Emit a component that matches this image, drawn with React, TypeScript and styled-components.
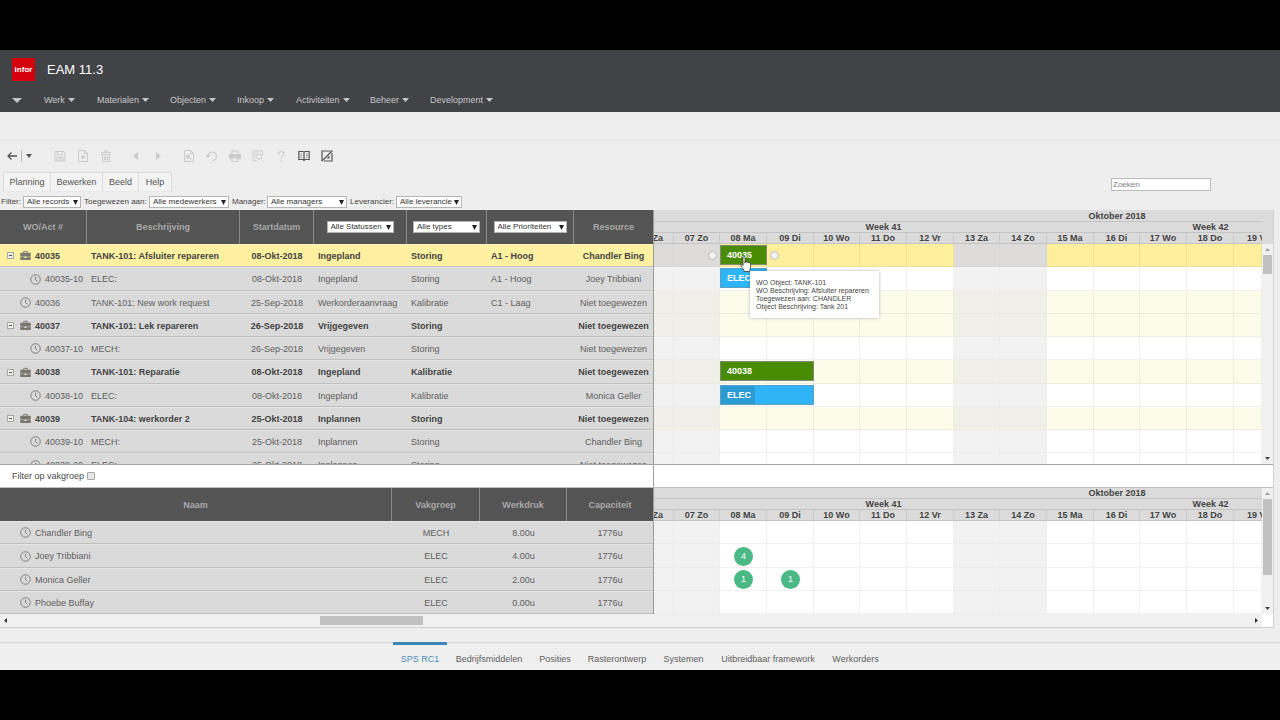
import React from "react";
import styled, { createGlobalStyle, css } from "styled-components";

const GlobalStyle = createGlobalStyle`
  * { box-sizing: border-box; }
  body {
    margin: 0;
    background: #000;
    font-family: "Liberation Sans", Arial, sans-serif;
    font-size: 9px;
    color: #4a4a4a;
  }
  button, input, select { font-family: inherit; }
`;

/* ---------- frame ---------- */

const Screen = styled.div`
  min-height: 100vh;
  display: flex;
  flex-direction: column;
  padding: 50px 0;
  background: #000;
`;

const Application = styled.div`
  flex: 1;
  display: flex;
  flex-direction: column;
  background: #eeeeee;
`;

/* ---------- top bar ---------- */

const TopBar = styled.header`
  background: #424347;
  height: 62px;
`;

const Brand = styled.div`
  display: flex;
  align-items: center;
  gap: 12px;
  height: 38px;
  padding-left: 12px;
`;

const Logo = styled.div`
  width: 23px;
  height: 23px;
  background: #d5000e;
  color: #fff;
  font: bold 8px/23px "Liberation Sans", Arial, sans-serif;
  text-align: center;
`;

const ProductName = styled.h1`
  margin: 0;
  font-size: 13px;
  font-weight: 400;
  color: #fff;
`;

const MainNav = styled.nav`
  display: flex;
  align-items: center;
  height: 24px;
  padding-left: 12px;
`;

const NavButton = styled.button<{ $width: number }>`
  display: flex;
  align-items: center;
  gap: 3px;
  width: ${(p) => p.$width}px;
  padding: 0;
  border: 0;
  background: none;
  color: #c6c6c9;
  font-size: 9px;
  line-height: 12px;
  text-align: left;
`;

/* ---------- tool area ---------- */

const TitleStrip = styled.div`
  height: 29px;
  border-bottom: 1px solid #e3e3e3;
`;

const Toolbar = styled.div`
  display: flex;
  align-items: center;
  height: 31px;
  padding: 0 0 2px 5px;
`;

const ToolButton = styled.button<{ $gap?: number; $dim?: boolean; $narrow?: boolean }>`
  display: flex;
  align-items: center;
  justify-content: center;
  width: ${(p) => (p.$narrow ? 14 : 23)}px;
  height: 16px;
  margin-left: ${(p) => p.$gap ?? 0}px;
  padding: 0;
  border: 0;
  background: none;
  color: ${(p) => (p.$dim ? "#cbcbcb" : "#555")};
`;

const ToolDivider = styled.span`
  width: 1px;
  height: 12px;
  margin-left: 2px;
  background: #bdbdbd;
`;

const MenuRow = styled.div`
  display: flex;
  align-items: flex-start;
  height: 20px;
  padding: 0 69px 0 3px;
`;

const MenuButton = styled.button<{ $width: number }>`
  width: ${(p) => p.$width}px;
  height: 20px;
  padding: 0;
  border: 1px solid #dcdcdc;
  border-left-width: 0;
  border-bottom-color: #e8e8e8;
  background: #f3f3f3;
  color: #555;
  font-size: 9px;
  &:first-child { border-left-width: 1px; }
`;

const SearchBox = styled.input`
  width: 100px;
  height: 13px;
  margin: 6px 0 0 auto;
  padding: 0 1px;
  border: 1px solid #bcbcbc;
  background: #fff;
  font-size: 8px;
  &::placeholder { color: #808080; opacity: 1; }
`;

const FilterRow = styled.div`
  display: flex;
  align-items: center;
  height: 18px;
  padding-top: 1px;
`;

const FilterLabel = styled.label<{ $width: number }>`
  width: ${(p) => p.$width}px;
  padding-left: 3px;
  font-size: 8px;
  line-height: 12px;
  white-space: nowrap;
  color: #444;
  &:first-child { padding-left: 1px; }
`;

const SelectFrame = styled.span<{ $width: number }>`
  position: relative;
  display: inline-block;
  width: ${(p) => p.$width}px;
  height: 12px;
  svg {
    position: absolute;
    right: 3px;
    top: 4px;
    pointer-events: none;
  }
`;

const SelectBox = styled.select`
  appearance: none;
  display: block;
  width: 100%;
  height: 12px;
  padding: 0 9px 0 3px;
  border: 1px solid #b4b4b4;
  border-radius: 0;
  background: #fff;
  color: #333;
  font-size: 8px;
  line-height: 10px;
`;

/* ---------- planning panel ---------- */

const Panel = styled.main`
  margin-right: 7px;
  background: #fff;
  border-bottom: 1px solid #cfcfcf;
  box-shadow: 1px 0 0 #d2d2d2;
`;

const Split = styled.section`
  display: grid;
  grid-template-columns: 653px minmax(0, 1fr);
`;

const ListPane = styled.div<{ $height: number; $line?: boolean }>`
  height: ${(p) => p.$height}px;
  overflow: hidden;
  ${(p) => p.$line && css`border-bottom: 1px solid #a6a6a6;`}
`;

const rowHeights = css`
  height: 23px;
  &:nth-child(4n + 2) { height: 24px; }
`;

const ListTable = styled.table<{ $head: number }>`
  width: 100%;
  table-layout: fixed;
  border-collapse: separate;
  border-spacing: 0;
  thead th { height: ${(p) => p.$head}px; }
`;

const HeadCell = styled.th<{ $width: number }>`
  width: ${(p) => p.$width}px;
  padding: 0;
  background: #545454;
  border-right: 1px solid #8a8a8a;
  color: #a9a9a9;
  font-size: 9px;
  font-weight: 700;
  text-align: center;
  vertical-align: middle;
  &:last-child { border-right: 0; }
`;

const ListRow = styled.tr<{ $bold?: boolean; $selected?: boolean }>`
  ${rowHeights}
  background: ${(p) => (p.$selected ? "#fdf0a0" : "#dadada")};
  color: ${(p) => (p.$bold ? "#444" : "#606060")};
  font-weight: ${(p) => (p.$bold ? 700 : 400)};
`;

const ListCell = styled.td<{ $center?: boolean; $pad?: number }>`
  padding: 1px 0 0 ${(p) => (p.$center ? 0 : p.$pad ?? 4)}px;
  border-bottom: 1px solid #bfbfbf;
  box-shadow: inset 0 1px 0 rgba(255, 255, 255, 0.35);
  font-size: 9px;
  line-height: 12px;
  text-align: ${(p) => (p.$center ? "center" : "left")};
  white-space: nowrap;
  vertical-align: middle;
`;

const TreeLabel = styled.span<{ $indent: number }>`
  display: flex;
  align-items: center;
  gap: 4px;
  padding-left: ${(p) => p.$indent}px;
`;

const Expander = styled.button`
  width: 7px;
  height: 7px;
  margin-right: 2px;
  padding: 0;
  display: flex;
  align-items: center;
  justify-content: center;
  border: 1px solid #a8a8a8;
  background: #eeeeea;
  &::before {
    content: "";
    width: 3px;
    height: 1px;
    background: #555;
  }
`;

/* ---------- timeline ---------- */

const dayColumns =
  "20px 46px 47px 47px 46px 47px 47px 46px 47px 47px 46px 47px 47px minmax(0, 1fr)";

const Timeline = styled.div`
  border-left: 1px solid #9c9c9c;
  min-width: 0;
`;

const TimelineWithBar = styled(Timeline)`
  display: flex;
`;

const TimelineMain = styled.div`
  flex: 1;
  min-width: 0;
`;

const Scale = styled.div<{ $top?: boolean }>`
  background: #dbdbdb;
  ${(p) => p.$top && css`padding: 1px 11px 0 0;`}
`;

const ScaleRow = styled.div`
  display: grid;
  grid-template-columns: ${dayColumns};
  height: 11px;
  border-bottom: 1px solid #c4c4c4;
  font-size: 9px;
  font-weight: 700;
  line-height: 11px;
  color: #444;
`;

const ScaleLabel = styled.span<{ $column: number }>`
  grid-column: ${(p) => p.$column};
  justify-self: center;
  white-space: nowrap;
`;

const DayLabel = styled.span<{ $cut?: "start" | "end" }>`
  display: flex;
  justify-content: ${(p) =>
    p.$cut === "start" ? "flex-end" : p.$cut === "end" ? "flex-start" : "center"};
  padding-right: ${(p) => (p.$cut === "start" ? 10 : 0)}px;
  padding-left: ${(p) => (p.$cut === "end" ? 13 : 0)}px;
  border-right: 1px solid #cacaca;
  overflow: hidden;
  white-space: nowrap;
  &:last-child { border-right: 0; }
`;

const BodyRows = styled.div<{ $height: number }>`
  height: ${(p) => p.$height}px;
  overflow: hidden;
`;

const BodyLine = styled.div`
  display: flex;
  border-bottom: 1px solid #a6a6a6;
`;

type Tone = "selected" | "pale" | "plain";

const toneColour: Record<Tone, [string, string]> = {
  selected: ["#feef9d", "#dddcda"],
  pale: ["#fdfbe9", "#f0efe8"],
  plain: ["#ffffff", "#f2f2f2"],
};

const GanttRow = styled.div`
  ${rowHeights}
  display: grid;
  grid-template-columns: ${dayColumns};
  grid-template-rows: 100%;
`;

const DayCell = styled.div<{ $tone: Tone; $off: boolean; $column: number }>`
  grid-row: 1;
  grid-column: ${(p) => p.$column};
  background: ${(p) => toneColour[p.$tone][p.$off ? 1 : 0]};
  border-right: 1px solid rgba(0, 0, 0, ${(p) => (p.$off ? 0.02 : 0.06)});
  border-bottom: 1px solid rgba(0, 0, 0, ${(p) => (p.$off ? 0.02 : 0.06)});
`;

const TaskBar = styled.div<{ $days: number; $kind: "order" | "activity" }>`
  grid-row: 1;
  grid-column: 3 / span ${(p) => p.$days};
  position: relative;
  height: 20px;
  margin-top: 1px;
  border: 1px solid ${(p) => (p.$kind === "order" ? "#7f8a76" : "#5c9fc4")};
  background: ${(p) => (p.$kind === "order" ? "#4a8b04" : "#2fb5f7")};
  color: #fff;
  font-size: 9px;
  font-weight: 700;
  line-height: 19px;
`;

const TaskName = styled.span<{ $progress?: boolean }>`
  display: block;
  width: ${(p) => (p.$progress ? "34px" : "auto")};
  height: 18px;
  padding-left: 6px;
  background: ${(p) => (p.$progress ? "#2b9bd3" : "none")};
`;

const LinkHandle = styled.span<{ $side: "left" | "right" }>`
  position: absolute;
  top: 5px;
  ${(p) => p.$side}: -13px;
  width: 9px;
  height: 9px;
  border: 1px solid #bcbcbc;
  border-radius: 50%;
  background: #f2f1ee;
`;

const Tooltip = styled.div`
  position: absolute;
  left: 29px;
  top: 25px;
  z-index: 2;
  width: 129px;
  padding: 8px 6px 7px;
  background: #fff;
  box-shadow: 0 0 3px rgba(0, 0, 0, 0.3);
  color: #444;
  font-size: 7px;
  font-weight: 400;
  line-height: 8px;
  white-space: nowrap;
`;

const Pointer = styled.svg`
  position: absolute;
  left: 19px;
  top: 10px;
  z-index: 3;
`;

const LoadBadge = styled.span<{ $column: number }>`
  grid-row: 1;
  grid-column: ${(p) => p.$column};
  place-self: center;
  width: 19px;
  height: 19px;
  border-radius: 50%;
  background: #4bb985;
  color: #fff;
  font-size: 9px;
  line-height: 19px;
  text-align: center;
`;

const ScrollTrack = styled.div`
  display: flex;
  flex-direction: column;
  align-items: center;
  width: 11px;
  background: #f1f1f1;
`;

const ScrollArrow = styled.span`
  display: flex;
  align-items: center;
  justify-content: center;
  width: 11px;
  height: 11px;
`;

const ScrollThumb = styled.span<{ $length: number }>`
  width: 9px;
  height: ${(p) => p.$length}px;
  margin-bottom: auto;
  background: #c1c1c1;
`;

const GroupFilter = styled.div`
  display: grid;
  grid-template-columns: 653px minmax(0, 1fr);
  height: 23px;
  border-bottom: 1px solid #bdbdbd;
`;

const GroupFilterLabel = styled.label`
  display: flex;
  align-items: center;
  gap: 3px;
  padding-left: 12px;
  color: #4a4a4a;
`;

const GroupCheck = styled.input`
  appearance: none;
  width: 8px;
  height: 8px;
  margin: 0;
  border: 1px solid #a8a8a8;
  border-radius: 1px;
  background: #e6e6e6;
`;

const HorizontalScroll = styled.div`
  display: flex;
  align-items: center;
  height: 13px;
  margin-right: 11px;
  background: #f0f0f0;
`;

const HorizontalThumb = styled.span`
  width: 103px;
  height: 9px;
  margin: 0 auto 0 309px;
  background: #c1c1c1;
`;

/* ---------- bottom tabs ---------- */

const BottomTabs = styled.nav`
  display: flex;
  height: 28px;
  margin-top: auto;
  padding-left: 393px;
  border-top: 1px solid #d6d6d6;
  background: #efefef;
`;

const BottomTab = styled.a<{ $width: number; $active?: boolean }>`
  width: ${(p) => p.$width}px;
  margin-top: -1px;
  border-top: 3px solid ${(p) => (p.$active ? "#3c87b8" : "transparent")};
  color: ${(p) => (p.$active ? "#4a8dbb" : "#606060")};
  font-size: 9px;
  line-height: 29px;
  text-align: center;
  text-decoration: none;
  white-space: nowrap;
`;

/* ---------- icons ---------- */

type Direction = "down" | "up" | "left" | "right";

const triangles: Record<Direction, string> = {
  down: "M0 0h8L4 8z",
  up: "M0 8h8L4 0z",
  left: "M8 0v8L0 4z",
  right: "M0 0v8l8-4z",
};

function Triangle({ to, w, h, fill = "currentColor" }: { to: Direction; w: number; h: number; fill?: string }) {
  return (
    <svg width={w} height={h} viewBox="0 0 8 8" preserveAspectRatio="none" aria-hidden="true">
      <path d={triangles[to]} fill={fill} />
    </svg>
  );
}

function Icon({ children, size = 12 }: { children: React.ReactNode; size?: number }) {
  return (
    <svg
      width={size}
      height={size}
      viewBox="0 0 12 12"
      fill="none"
      stroke="currentColor"
      strokeWidth="1"
      aria-hidden="true"
    >
      {children}
    </svg>
  );
}

const BackIcon = () => (
  <Icon>
    <path d="M11 6H2M5.500 2.500L2 6l3.500 3.500" strokeWidth="1.300" />
  </Icon>
);
const SaveIcon = () => (
  <Icon>
    <path d="M1 1.500h8.500l1.500 1.500v8H1zM3 1.500v3h5.500v-3M3 11V7h6v4M4.500 8.500h3M4.500 10h3" />
  </Icon>
);
const NewIcon = () => (
  <Icon>
    <path d="M1.500 .5h6l3 3v8h-9zM7.500 .5v3h3" />
    <path d="M6 5v4M4 7h4" strokeWidth="1.500" />
  </Icon>
);
const TrashIcon = () => (
  <Icon>
    <path d="M1 2.500h10M4.500 2.500V.8h3v1.700M1.500 4.500h9M2.500 4.500v7h7v-7M4.500 6v4M6 6v4M7.500 6v4" />
  </Icon>
);
const PageIcon = () => (
  <Icon>
    <path d="M1.500 .5h6l3 3v8h-9zM7.500 .5v3h3" />
    <path d="M4 9V5.500h3M4 5.500l4 4" strokeWidth="1.300" />
  </Icon>
);
const UndoIcon = () => (
  <Icon>
    <path d="M2 6.500a4.200 4.200 0 1 1 4.500 4M.2 5L2 7l2.200-1.700" strokeWidth="1.200" />
  </Icon>
);
const PrintIcon = () => (
  <Icon>
    <path d="M3 4V1h6v3M3 8h6v3.500H3z" />
    <path d="M.5 4.500h11v4H9V7H3v1.500H.5z" fill="currentColor" />
  </Icon>
);
const PreviewIcon = () => (
  <Icon>
    <path d="M5 10.500H1V1h9.500v5M2.500 3h3M2.500 5h1.500M2.500 7h1.500M8.800 9l2.400 2.300" />
    <circle cx="7" cy="6.500" r="2.500" />
  </Icon>
);
const HelpIcon = () => (
  <Icon>
    <path d="M3.500 4.200C3.500 .8 9 .8 9 4 9 6 6.200 5.800 6.200 8.500M6.200 10v1.500" strokeWidth="1.200" />
  </Icon>
);
const BookIcon = () => (
  <Icon>
    <path d="M.8 1.500h4.400L6 2.200l.8-.7h4.400v8H7L6 10.500 5 9.500H.8zM6 2.200v8.300" strokeWidth="1.200" />
    <path d="M2.200 3.800h2M2.200 5.500h2M2.200 7.300h2M7.800 3.800h2M7.800 5.500h2M7.800 7.300h2" strokeWidth=".5" />
  </Icon>
);
const SwitchOffIcon = () => (
  <Icon>
    <path d="M9.500 1H1v10M3 11h8V3" strokeWidth="1.200" />
    <path d="M11.500 .5L1 11" strokeWidth="1.300" />
    <path d="M8.500 5.500v3h-3z" fill="currentColor" stroke="none" />
  </Icon>
);
const ClockIcon = () => (
  <Icon size={11}>
    <circle cx="6" cy="6" r="5.200" stroke="#777" />
    <path d="M6 3v3.200l2 1.600" stroke="#777" />
  </Icon>
);
const BriefcaseIcon = () => (
  <svg width="11" height="11" viewBox="0 0 12 12" aria-hidden="true">
    <path d="M4 3.200V1.500h4v1.700" fill="none" stroke="#7b776f" />
    <path d="M.3 3h11.400v3.700L7 7.700V6.900H5v.8L.3 6.700z" fill="#7b776f" />
    <path d="M.3 7.200L5 8.200v.6h2v-.6l4.700-1V11H.3z" fill="#7b776f" />
  </svg>
);

/* ---------- data ---------- */

const navItems: [string, number][] = [
  ["Werk", 53],
  ["Materialen", 73],
  ["Objecten", 67],
  ["Inkoop", 59],
  ["Activiteiten", 74],
  ["Beheer", 60],
  ["Development", 70],
];

const menuItems: [string, number][] = [
  ["Planning", 48],
  ["Bewerken", 52],
  ["Beeld", 36],
  ["Help", 33],
];

const filters: [string, string, number, string, number][] = [
  ["records", "Filter:", 23, "Alle records", 58],
  ["employees", "Toegewezen aan:", 68, "Alle medewerkers", 80],
  ["managers", "Manager:", 38, "Alle managers", 80],
  ["suppliers", "Leverancier:", 49, "Alle leverancie", 66],
];

type Order = {
  id: string;
  kind: "group" | "single" | "child";
  text: string;
  date: string;
  status: string;
  type: string;
  prio?: string;
  who: string;
  tone: Tone;
};

const orders: Order[] = [
  { id: "40035", kind: "group", text: "TANK-101: Afsluiter repareren", date: "08-Okt-2018", status: "Ingepland", type: "Storing", prio: "A1 - Hoog", who: "Chandler Bing", tone: "selected" },
  { id: "40035-10", kind: "child", text: "ELEC:", date: "08-Okt-2018", status: "Ingepland", type: "Storing", prio: "A1 - Hoog", who: "Joey Tribbiani", tone: "plain" },
  { id: "40036", kind: "single", text: "TANK-101: New work request", date: "25-Sep-2018", status: "Werkorderaanvraag", type: "Kalibratie", prio: "C1 - Laag", who: "Niet toegewezen", tone: "pale" },
  { id: "40037", kind: "group", text: "TANK-101: Lek repareren", date: "26-Sep-2018", status: "Vrijgegeven", type: "Storing", who: "Niet toegewezen", tone: "pale" },
  { id: "40037-10", kind: "child", text: "MECH:", date: "26-Sep-2018", status: "Vrijgegeven", type: "Storing", who: "Niet toegewezen", tone: "plain" },
  { id: "40038", kind: "group", text: "TANK-101: Reparatie", date: "08-Okt-2018", status: "Ingepland", type: "Kalibratie", who: "Niet toegewezen", tone: "pale" },
  { id: "40038-10", kind: "child", text: "ELEC:", date: "08-Okt-2018", status: "Ingepland", type: "Kalibratie", who: "Monica Geller", tone: "plain" },
  { id: "40039", kind: "group", text: "TANK-104: werkorder 2", date: "25-Okt-2018", status: "Inplannen", type: "Storing", who: "Niet toegewezen", tone: "pale" },
  { id: "40039-10", kind: "child", text: "MECH:", date: "25-Okt-2018", status: "Inplannen", type: "Storing", who: "Chandler Bing", tone: "plain" },
  { id: "40039-20", kind: "child", text: "ELEC:", date: "25-Okt-2018", status: "Inplannen", type: "Storing", who: "Niet toegewezen", tone: "plain" },
];

const people: { name: string; group: string; load: string; capacity: string; badges: [number, number][] }[] = [
  { name: "Chandler Bing", group: "MECH", load: "8.00u", capacity: "1776u", badges: [] },
  { name: "Joey Tribbiani", group: "ELEC", load: "4.00u", capacity: "1776u", badges: [[3, 4]] },
  { name: "Monica Geller", group: "ELEC", load: "2.00u", capacity: "1776u", badges: [[3, 1], [4, 1]] },
  { name: "Phoebe Buffay", group: "ELEC", load: "0.00u", capacity: "1776u", badges: [] },
];

const days = [
  "Za", "07 Zo", "08 Ma", "09 Di", "10 Wo", "11 Do", "12 Vr",
  "13 Za", "14 Zo", "15 Ma", "16 Di", "17 Wo", "18 Do", "19 Vr",
];

const isWeekend = (day: string) => day.endsWith("Za") || day.endsWith("Zo");

const bottomTabs: [string, number][] = [
  ["SPS RC1", 54],
  ["Bedrijfsmiddelen", 84],
  ["Posities", 48],
  ["Rasterontwerp", 76],
  ["Systemen", 57],
  ["Uitbreidbaar framework", 112],
  ["Werkorders", 63],
];

/* ---------- parts ---------- */

function Picker({ id, label, value, width }: { id?: string; label?: string; value: string; width: number }) {
  return (
    <SelectFrame $width={width}>
      <SelectBox id={id} aria-label={label}>
        <option>{value}</option>
      </SelectBox>
      <Triangle to="down" w={5} h={5} fill="#222" />
    </SelectFrame>
  );
}

function TimeScale({ top }: { top?: boolean }) {
  return (
    <Scale $top={top}>
      <ScaleRow>
        <ScaleLabel $column={11}>Oktober 2018</ScaleLabel>
      </ScaleRow>
      <ScaleRow>
        <ScaleLabel $column={6}>Week 41</ScaleLabel>
        <ScaleLabel $column={13}>Week 42</ScaleLabel>
      </ScaleRow>
      <ScaleRow>
        {days.map((day, i) => (
          <DayLabel key={day} $cut={i === 0 ? "start" : i === days.length - 1 ? "end" : undefined}>
            {day}
          </DayLabel>
        ))}
      </ScaleRow>
    </Scale>
  );
}

function DayCells({ tone }: { tone: Tone }) {
  return (
    <>
      {days.map((day, i) => (
        <DayCell key={day} $tone={tone} $off={isWeekend(day)} $column={i + 1} />
      ))}
    </>
  );
}

function VerticalScroll({ length }: { length: number }) {
  return (
    <ScrollTrack>
      <ScrollArrow><Triangle to="up" w={5} h={3} fill="#a0a0a0" /></ScrollArrow>
      <ScrollThumb $length={length} />
      <ScrollArrow><Triangle to="down" w={5} h={3} fill="#444" /></ScrollArrow>
    </ScrollTrack>
  );
}

function OrderBar({ id }: { id: string }) {
  switch (id) {
    case "40035":
      return (
        <TaskBar $days={1} $kind="order">
          <LinkHandle $side="left" />
          <TaskName>40035</TaskName>
          <LinkHandle $side="right" />
          <Tooltip role="tooltip">
            WO Object: TANK-101<br />
            WO Beschrijving: Afsluiter repareren<br />
            Toegewezen aan: CHANDLER<br />
            Object Beschrijving: Tank 201
          </Tooltip>
          <Pointer width="12" height="17" viewBox="0 0 12 17" aria-hidden="true">
            <path
              d="M3 1.500c0-1.300 2-1.300 2 0V7l.5-1c.6-.6 1.500-.3 1.500.5.600-.7 1.700-.4 1.800.5.700-.5 1.800-.2 1.800.8V11c0 1.500-1 2.500-1 4.500H4.300C4 13.500 2.500 12.500 1 10 .2 8.600 1.500 7.800 2.300 8.800l.7.800z"
              fill="#fff"
              stroke="#333"
              strokeWidth=".8"
            />
          </Pointer>
        </TaskBar>
      );
    case "40035-10":
      return (
        <TaskBar $days={1} $kind="activity">
          <TaskName>ELEC</TaskName>
        </TaskBar>
      );
    case "40038":
      return (
        <TaskBar $days={2} $kind="order">
          <TaskName>40038</TaskName>
        </TaskBar>
      );
    case "40038-10":
      return (
        <TaskBar $days={2} $kind="activity">
          <TaskName $progress>ELEC</TaskName>
        </TaskBar>
      );
    default:
      return null;
  }
}

function OrderList() {
  return (
    <ListTable $head={34}>
      <thead>
        <tr>
          <HeadCell $width={87}>WO/Act #</HeadCell>
          <HeadCell $width={153}>Beschrijving</HeadCell>
          <HeadCell $width={74}>Startdatum</HeadCell>
          <HeadCell $width={93}><Picker label="Status" value="Alle Statussen" width={67} /></HeadCell>
          <HeadCell $width={80}><Picker label="Type" value="Alle types" width={67} /></HeadCell>
          <HeadCell $width={87}><Picker label="Prioriteit" value="Alle Prioriteiten" width={73} /></HeadCell>
          <HeadCell $width={79}>Resource</HeadCell>
        </tr>
      </thead>
      <tbody>
        {orders.map((o) => (
          <ListRow key={o.id} $bold={o.kind === "group"} $selected={o.tone === "selected"}>
            <ListCell $pad={0}>
              <TreeLabel $indent={o.kind === "group" ? 7 : o.kind === "single" ? 20 : 30}>
                {o.kind === "group" && <Expander aria-label={`Inklappen ${o.id}`} />}
                {o.kind === "group" ? <BriefcaseIcon /> : <ClockIcon />}
                {o.id}
              </TreeLabel>
            </ListCell>
            <ListCell>{o.text}</ListCell>
            <ListCell $center>{o.date}</ListCell>
            <ListCell>{o.status}</ListCell>
            <ListCell>{o.type}</ListCell>
            <ListCell>{o.prio}</ListCell>
            <ListCell $center>{o.who}</ListCell>
          </ListRow>
        ))}
      </tbody>
    </ListTable>
  );
}

function PeopleList() {
  return (
    <ListTable $head={33}>
      <thead>
        <tr>
          <HeadCell $width={392}>Naam</HeadCell>
          <HeadCell $width={88}>Vakgroep</HeadCell>
          <HeadCell $width={87}>Werkdruk</HeadCell>
          <HeadCell $width={86}>Capaciteit</HeadCell>
        </tr>
      </thead>
      <tbody>
        {people.map((p) => (
          <ListRow key={p.name}>
            <ListCell $pad={0}>
              <TreeLabel $indent={20}>
                <ClockIcon />
                {p.name}
              </TreeLabel>
            </ListCell>
            <ListCell $center>{p.group}</ListCell>
            <ListCell $center>{p.load}</ListCell>
            <ListCell $center>{p.capacity}</ListCell>
          </ListRow>
        ))}
      </tbody>
    </ListTable>
  );
}

export default function App() {
  return (
    <Screen>
      <GlobalStyle />
      <Application>
        <TopBar>
          <Brand>
            <Logo>infor</Logo>
            <ProductName>EAM 11.3</ProductName>
          </Brand>
          <MainNav>
            <NavButton $width={32} aria-label="Start">
              <Triangle to="down" w={10} h={5} />
            </NavButton>
            {navItems.map(([name, width]) => (
              <NavButton key={name} $width={width}>
                {name}
                <Triangle to="down" w={7} h={4} />
              </NavButton>
            ))}
          </MainNav>
        </TopBar>

        <TitleStrip />

        <Toolbar>
          <ToolButton $narrow aria-label="Terug"><BackIcon /></ToolButton>
          <ToolDivider />
          <ToolButton $narrow aria-label="Geschiedenis"><Triangle to="down" w={6} h={4} /></ToolButton>
          <ToolButton $dim $gap={12} aria-label="Opslaan"><SaveIcon /></ToolButton>
          <ToolButton $dim aria-label="Nieuw"><NewIcon /></ToolButton>
          <ToolButton $dim aria-label="Verwijderen"><TrashIcon /></ToolButton>
          <ToolButton $dim $gap={7} aria-label="Vorige"><Triangle to="left" w={5} h={8} /></ToolButton>
          <ToolButton $dim aria-label="Volgende"><Triangle to="right" w={5} h={8} /></ToolButton>
          <ToolButton $dim $gap={7} aria-label="Document"><PageIcon /></ToolButton>
          <ToolButton $dim aria-label="Herstellen"><UndoIcon /></ToolButton>
          <ToolButton $dim aria-label="Afdrukken"><PrintIcon /></ToolButton>
          <ToolButton $dim aria-label="Voorbeeld"><PreviewIcon /></ToolButton>
          <ToolButton $dim aria-label="Help"><HelpIcon /></ToolButton>
          <ToolButton aria-label="Handleiding"><BookIcon /></ToolButton>
          <ToolButton aria-label="Bewerken uit"><SwitchOffIcon /></ToolButton>
        </Toolbar>

        <MenuRow>
          {menuItems.map(([name, width]) => (
            <MenuButton key={name} $width={width}>{name}</MenuButton>
          ))}
          <SearchBox type="text" placeholder="Zoeken" aria-label="Zoeken" />
        </MenuRow>

        <FilterRow>
          {filters.map(([id, label, labelWidth, value, width]) => (
            <React.Fragment key={id}>
              <FilterLabel htmlFor={id} $width={labelWidth}>{label}</FilterLabel>
              <Picker id={id} value={value} width={width} />
            </React.Fragment>
          ))}
        </FilterRow>

        <Panel>
          <Split>
            <ListPane $height={255} $line>
              <OrderList />
            </ListPane>
            <Timeline>
              <TimeScale top />
              <BodyLine>
                <TimelineMain>
                  <BodyRows $height={220}>
                    {orders.map((o) => (
                      <GanttRow key={o.id}>
                        <DayCells tone={o.tone} />
                        <OrderBar id={o.id} />
                      </GanttRow>
                    ))}
                  </BodyRows>
                </TimelineMain>
                <VerticalScroll length={19} />
              </BodyLine>
            </Timeline>
          </Split>

          <GroupFilter>
            <GroupFilterLabel>
              Filter op vakgroep
              <GroupCheck type="checkbox" />
            </GroupFilterLabel>
            <Timeline />
          </GroupFilter>

          <Split>
            <ListPane $height={126}>
              <PeopleList />
            </ListPane>
            <TimelineWithBar>
              <TimelineMain>
                <TimeScale />
                <BodyRows $height={93}>
                  {people.map((p) => (
                    <GanttRow key={p.name}>
                      <DayCells tone="plain" />
                      {p.badges.map(([column, count]) => (
                        <LoadBadge key={column} $column={column}>{count}</LoadBadge>
                      ))}
                    </GanttRow>
                  ))}
                </BodyRows>
              </TimelineMain>
              <VerticalScroll length={76} />
            </TimelineWithBar>
          </Split>

          <HorizontalScroll>
            <ScrollArrow><Triangle to="left" w={3} h={5} fill="#333" /></ScrollArrow>
            <HorizontalThumb />
            <ScrollArrow><Triangle to="right" w={3} h={5} fill="#333" /></ScrollArrow>
          </HorizontalScroll>
        </Panel>

        <BottomTabs>
          {bottomTabs.map(([name, width], i) => (
            <BottomTab key={name} href="#" $width={width} $active={i === 0}>{name}</BottomTab>
          ))}
        </BottomTabs>
      </Application>
    </Screen>
  );
}
